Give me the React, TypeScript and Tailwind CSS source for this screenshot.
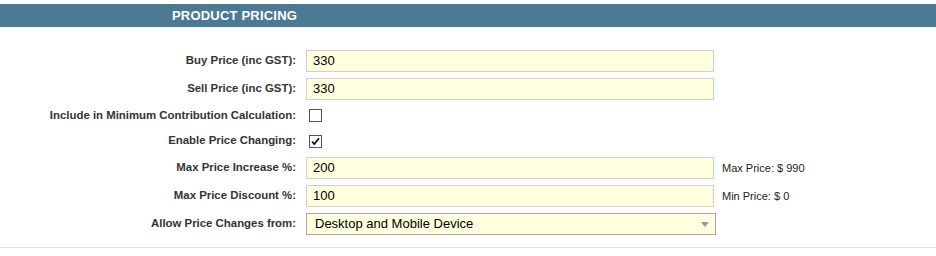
import React from "react";

type Row =
  | { kind: "input"; label: string; value: string; note?: string }
  | { kind: "check"; label: string; checked: boolean; h: string }
  | { kind: "select"; label: string; value: string };

const ROWS: Row[] = [
  { kind: "input", label: "Buy Price (inc GST):", value: "330" },
  { kind: "input", label: "Sell Price (inc GST):", value: "330" },
  { kind: "check", label: "Include in Minimum Contribution Calculation:", checked: false, h: "h-[25px]" },
  { kind: "check", label: "Enable Price Changing:", checked: true, h: "h-[26px]" },
  { kind: "input", label: "Max Price Increase %:", value: "200", note: "Max Price: $ 990" },
  { kind: "input", label: "Max Price Discount %:", value: "100", note: "Min Price: $ 0" },
  { kind: "select", label: "Allow Price Changes from:", value: "Desktop and Mobile Device" },
];

function CheckBox({ checked }: { checked: boolean }) {
  return (
    <span className="ml-[3px] flex h-[13px] w-[13px] items-center justify-center border border-[#555] bg-white">
      {checked && (
        <svg viewBox="0 0 11 11" className="h-[11px] w-[11px]" aria-hidden="true">
          <path d="M2 5.5l2.3 2.6L9 2.2" fill="none" stroke="#111" strokeWidth="1.7" />
        </svg>
      )}
    </span>
  );
}

export default function App() {
  return (
    <div className="h-[256px] w-[936px] bg-white pt-[4px] font-['Liberation_Sans',Arial,sans-serif]">
      <div className="flex h-[23px] items-center bg-[#4c7a93] pl-[172px] text-[13px] font-bold tracking-[0.2px] text-white">
        PRODUCT PRICING
      </div>

      <div className="mt-[20px] flex flex-col">
        {ROWS.map((row, i) => (
          <div key={i} className={`flex items-center ${row.kind === "check" ? row.h : "h-[28px]"}`}>
            <div className="w-[296px] text-right text-[11.4px] font-bold text-[#333]">{row.label}</div>
            <div className="ml-[10px] flex items-center">
              {row.kind === "input" && (
                <>
                  <div className="flex h-[22px] w-[408px] items-center border border-[#cfcfcf] bg-[#ffffe0] pl-[6px] text-[13px] text-black">
                    {row.value}
                  </div>
                  {row.note && <span className="ml-[8px] text-[11px] text-[#222]">{row.note}</span>}
                </>
              )}
              {row.kind === "check" && <CheckBox checked={row.checked} />}
              {row.kind === "select" && (
                <div className="flex h-[22px] w-[410px] items-center justify-between border border-[#a9a9a9] bg-[#ffffe0] pl-[8px] pr-[6px] text-[13px] text-black">
                  <span>{row.value}</span>
                  <svg viewBox="0 0 8 5" className="h-[5px] w-[8px]" aria-hidden="true">
                    <path d="M0 0h8L4 5z" fill="#999" />
                  </svg>
                </div>
              )}
            </div>
          </div>
        ))}
      </div>

      <div className="mt-[9px] border-t border-[#dddddd]" />
    </div>
  );
}
